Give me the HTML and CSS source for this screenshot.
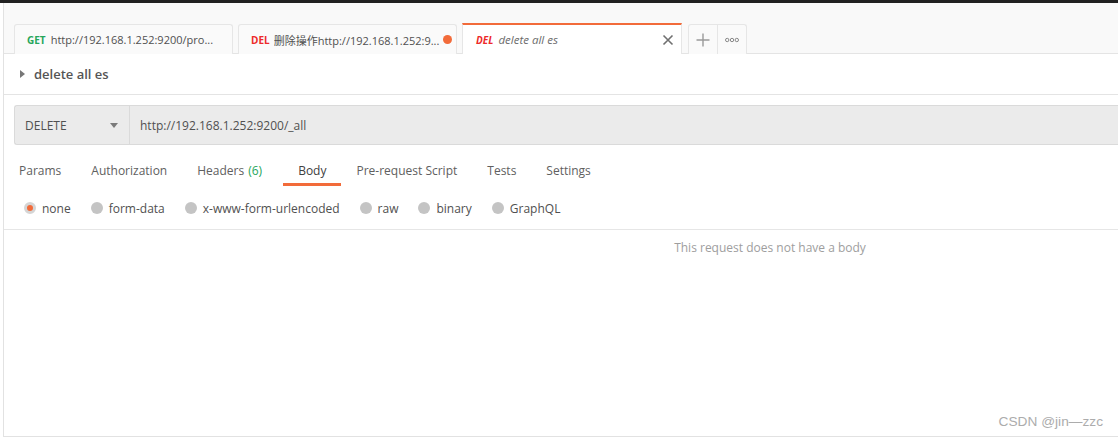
FILE: index.html
```html
<!DOCTYPE html>
<html>
<head>
    <title>delete all es</title>
    <meta charset="utf-8">
    <link rel="stylesheet" href="styles.css">
</head>
<body>
<div class="top-strip"></div>
<div class="app">
    <div class="tab-bar">
        <div class="tab">
            <span class="verb get">GET</span>
            <span class="tab-name">http://192.168.1.252:9200/pro...</span>
        </div>
        <div class="tab tab-dirty">
            <span class="verb del">DEL</span>
            <span class="tab-name">删除操作http://192.168.1.252:9...</span>
            <span class="unsaved-dot"></span>
        </div>
        <div class="tab tab-active">
            <span class="verb del">DEL</span>
            <span class="tab-name">delete all es</span>
            <svg class="tab-close" width="12" height="12" viewBox="0 0 12 12">
                <path d="M1.5 1.5 L10.5 10.5 M10.5 1.5 L1.5 10.5" stroke="#707070" stroke-width="1.6" fill="none"/>
            </svg>
        </div>
        <div class="tab-btn tab-new">
            <svg width="14" height="14" viewBox="0 0 14 14">
                <path d="M7 0.5 V13.5 M0.5 7 H13.5" stroke="#9a9a9a" stroke-width="1.4" fill="none"/>
            </svg>
        </div>
        <div class="tab-btn tab-more">
            <svg width="14" height="6" viewBox="0 0 14 6">
                <circle cx="2.2" cy="3" r="1.7" stroke="#8a8a8a" stroke-width="1" fill="none"/>
                <circle cx="7" cy="3" r="1.7" stroke="#8a8a8a" stroke-width="1" fill="none"/>
                <circle cx="11.8" cy="3" r="1.7" stroke="#8a8a8a" stroke-width="1" fill="none"/>
            </svg>
        </div>
    </div>

    <div class="request-title">
        <span class="caret-right"></span>
        <span>delete all es</span>
    </div>

    <div class="url-row">
        <div class="method">
            <span>DELETE</span>
            <span class="caret-down"></span>
        </div>
        <div class="url-input">http://192.168.1.252:9200/_all</div>
    </div>

    <ul class="req-tabs">
        <li>Params</li>
        <li>Authorization</li>
        <li class="req-tab-headers">Headers <span class="count">(6)</span></li>
        <li class="req-tab-active">Body</li>
        <li>Pre-request Script</li>
        <li>Tests</li>
        <li>Settings</li>
    </ul>

    <div class="body-types">
        <label class="radio"><span class="dot dot-on"></span>none</label>
        <label class="radio"><span class="dot"></span>form-data</label>
        <label class="radio"><span class="dot"></span>x-www-form-urlencoded</label>
        <label class="radio"><span class="dot"></span>raw</label>
        <label class="radio"><span class="dot"></span>binary</label>
        <label class="radio"><span class="dot"></span>GraphQL</label>
    </div>

    <div class="empty-body">This request does not have a body</div>

    <div class="watermark">CSDN @jin—zzc</div>
</div>
</body>
</html>
```

FILE: styles.css
```css
html, body {
    margin: 0;
    padding: 0;
    overflow: hidden;
}

body {
    font-family: "Open Sans", "Noto Sans CJK SC", sans-serif;
    font-size: 12px;
    color: #505050;
    background: #ffffff;
}

.top-strip {
    height: 3px;
    background: #212121;
}

.app {
    position: relative;
    margin-left: 3px;
    height: 433px;
    border-left: 1px solid #e2e2e2;
    border-bottom: 1px solid #e2e2e2;
}

/* tabs */
.tab-bar {
    display: flex;
    align-items: flex-end;
    height: 50px;
    padding-left: 10px;
    background: #f9f9f9;
    border-bottom: 1px solid #e4e4e4;
}

.tab {
    display: flex;
    align-items: center;
    box-sizing: border-box;
    width: 219px;
    height: 30px;
    margin-right: 5px;
    margin-bottom: -1px;
    padding: 0 12px 0 12px;
    background: #fafafa;
    border: 1px solid #e6e6e6;
    border-bottom: none;
    border-radius: 3px 3px 0 0;
    white-space: nowrap;
}

.tab-dirty {
    padding-right: 4px;
}

.verb {
    font-size: 10px;
    font-weight: 700;
    margin-right: 5px;
}

.tab-dirty .verb {
    margin-right: 4px;
}

.get {
    color: #26a65b;
}

.del {
    color: #ed2a2a;
}

.tab-name {
    flex: 1;
    overflow: hidden;
    text-overflow: clip;
    font-size: 11px;
    color: #505050;
}

.unsaved-dot {
    flex: none;
    width: 9px;
    height: 9px;
    margin-left: 1px;
    border-radius: 50%;
    background: #f26b3a;
}

.tab-active {
    width: 220px;
    height: 31px;
    margin-right: 6px;
    padding-left: 13px;
    background: #ffffff;
    border-top: 2px solid #f26b3a;
    border-radius: 0;
}

.tab-active .verb,
.tab-active .tab-name {
    font-style: italic;
}

.tab-active .tab-name {
    font-size: 11.5px;
    color: #6b6b6b;
}

.tab-close {
    margin-right: -5px;
}

.tab-btn {
    display: flex;
    align-items: center;
    justify-content: center;
    box-sizing: border-box;
    height: 30px;
    margin-bottom: -1px;
    background: #fafafa;
    border: 1px solid #e6e6e6;
    border-bottom: none;
}

.tab-new {
    width: 30px;
    border-radius: 3px 0 0 0;
}

.tab-more {
    width: 29px;
    border-left: none;
    border-radius: 0 3px 0 0;
}

/* title */
.request-title {
    display: flex;
    align-items: center;
    height: 40px;
    padding-left: 16px;
    border-bottom: 1px solid #e4e4e4;
    font-size: 13px;
    font-weight: 600;
    color: #555555;
}

.caret-right {
    width: 0;
    height: 0;
    margin-right: 9px;
    border-top: 4px solid transparent;
    border-bottom: 4px solid transparent;
    border-left: 5px solid #777777;
}

/* url */
.url-row {
    display: flex;
    height: 38px;
    margin: 10px 0 0 10px;
    background: #ebebeb;
    border: 1px solid #dadada;
    border-right: none;
    border-radius: 3px 0 0 3px;
}

.method {
    display: flex;
    align-items: center;
    justify-content: space-between;
    box-sizing: border-box;
    width: 115px;
    padding: 0 11px 0 10px;
    border-right: 1px solid #dadada;
    color: #505050;
}

.caret-down {
    width: 0;
    height: 0;
    border-left: 4px solid transparent;
    border-right: 4px solid transparent;
    border-top: 5px solid #7a7a7a;
}

.url-input {
    display: flex;
    align-items: center;
    padding-left: 10px;
    color: #505050;
}

/* request tabs */
.req-tabs {
    display: flex;
    margin: 0;
    padding: 0;
    list-style: none;
}

.req-tabs li {
    display: flex;
    align-items: center;
    box-sizing: border-box;
    height: 41px;
    padding: 13px 15px 0;
    color: #606060;
    border-bottom: 3px solid transparent;
}

.req-tabs .req-tab-headers {
    padding-right: 21px;
}

.req-tabs .req-tab-active {
    color: #404040;
    border-bottom-color: #f26b3a;
}

.count {
    margin-left: 4px;
    color: #26a65b;
}

/* body types */
.body-types {
    display: flex;
    align-items: center;
    height: 42px;
    margin-top: 1px;
    padding-left: 20px;
    border-bottom: 1px solid #e6e6e6;
}

.radio {
    display: flex;
    align-items: center;
    margin-right: 20px;
    color: #505050;
}

.dot {
    box-sizing: border-box;
    width: 12px;
    height: 12px;
    margin-right: 6px;
    border-radius: 50%;
    background: #c4c4c4;
}

.dot-on {
    background: #f26b3a;
    border: 3px solid #d5d5d5;
}

.empty-body {
    padding: 9px 0 0 418px;
    text-align: center;
    color: #9e9e9e;
}

.watermark {
    position: absolute;
    right: 15px;
    bottom: 7px;
    font-family: "Liberation Sans", Arial, sans-serif;
    font-size: 13.7px;
    color: #acacac;
}
```
